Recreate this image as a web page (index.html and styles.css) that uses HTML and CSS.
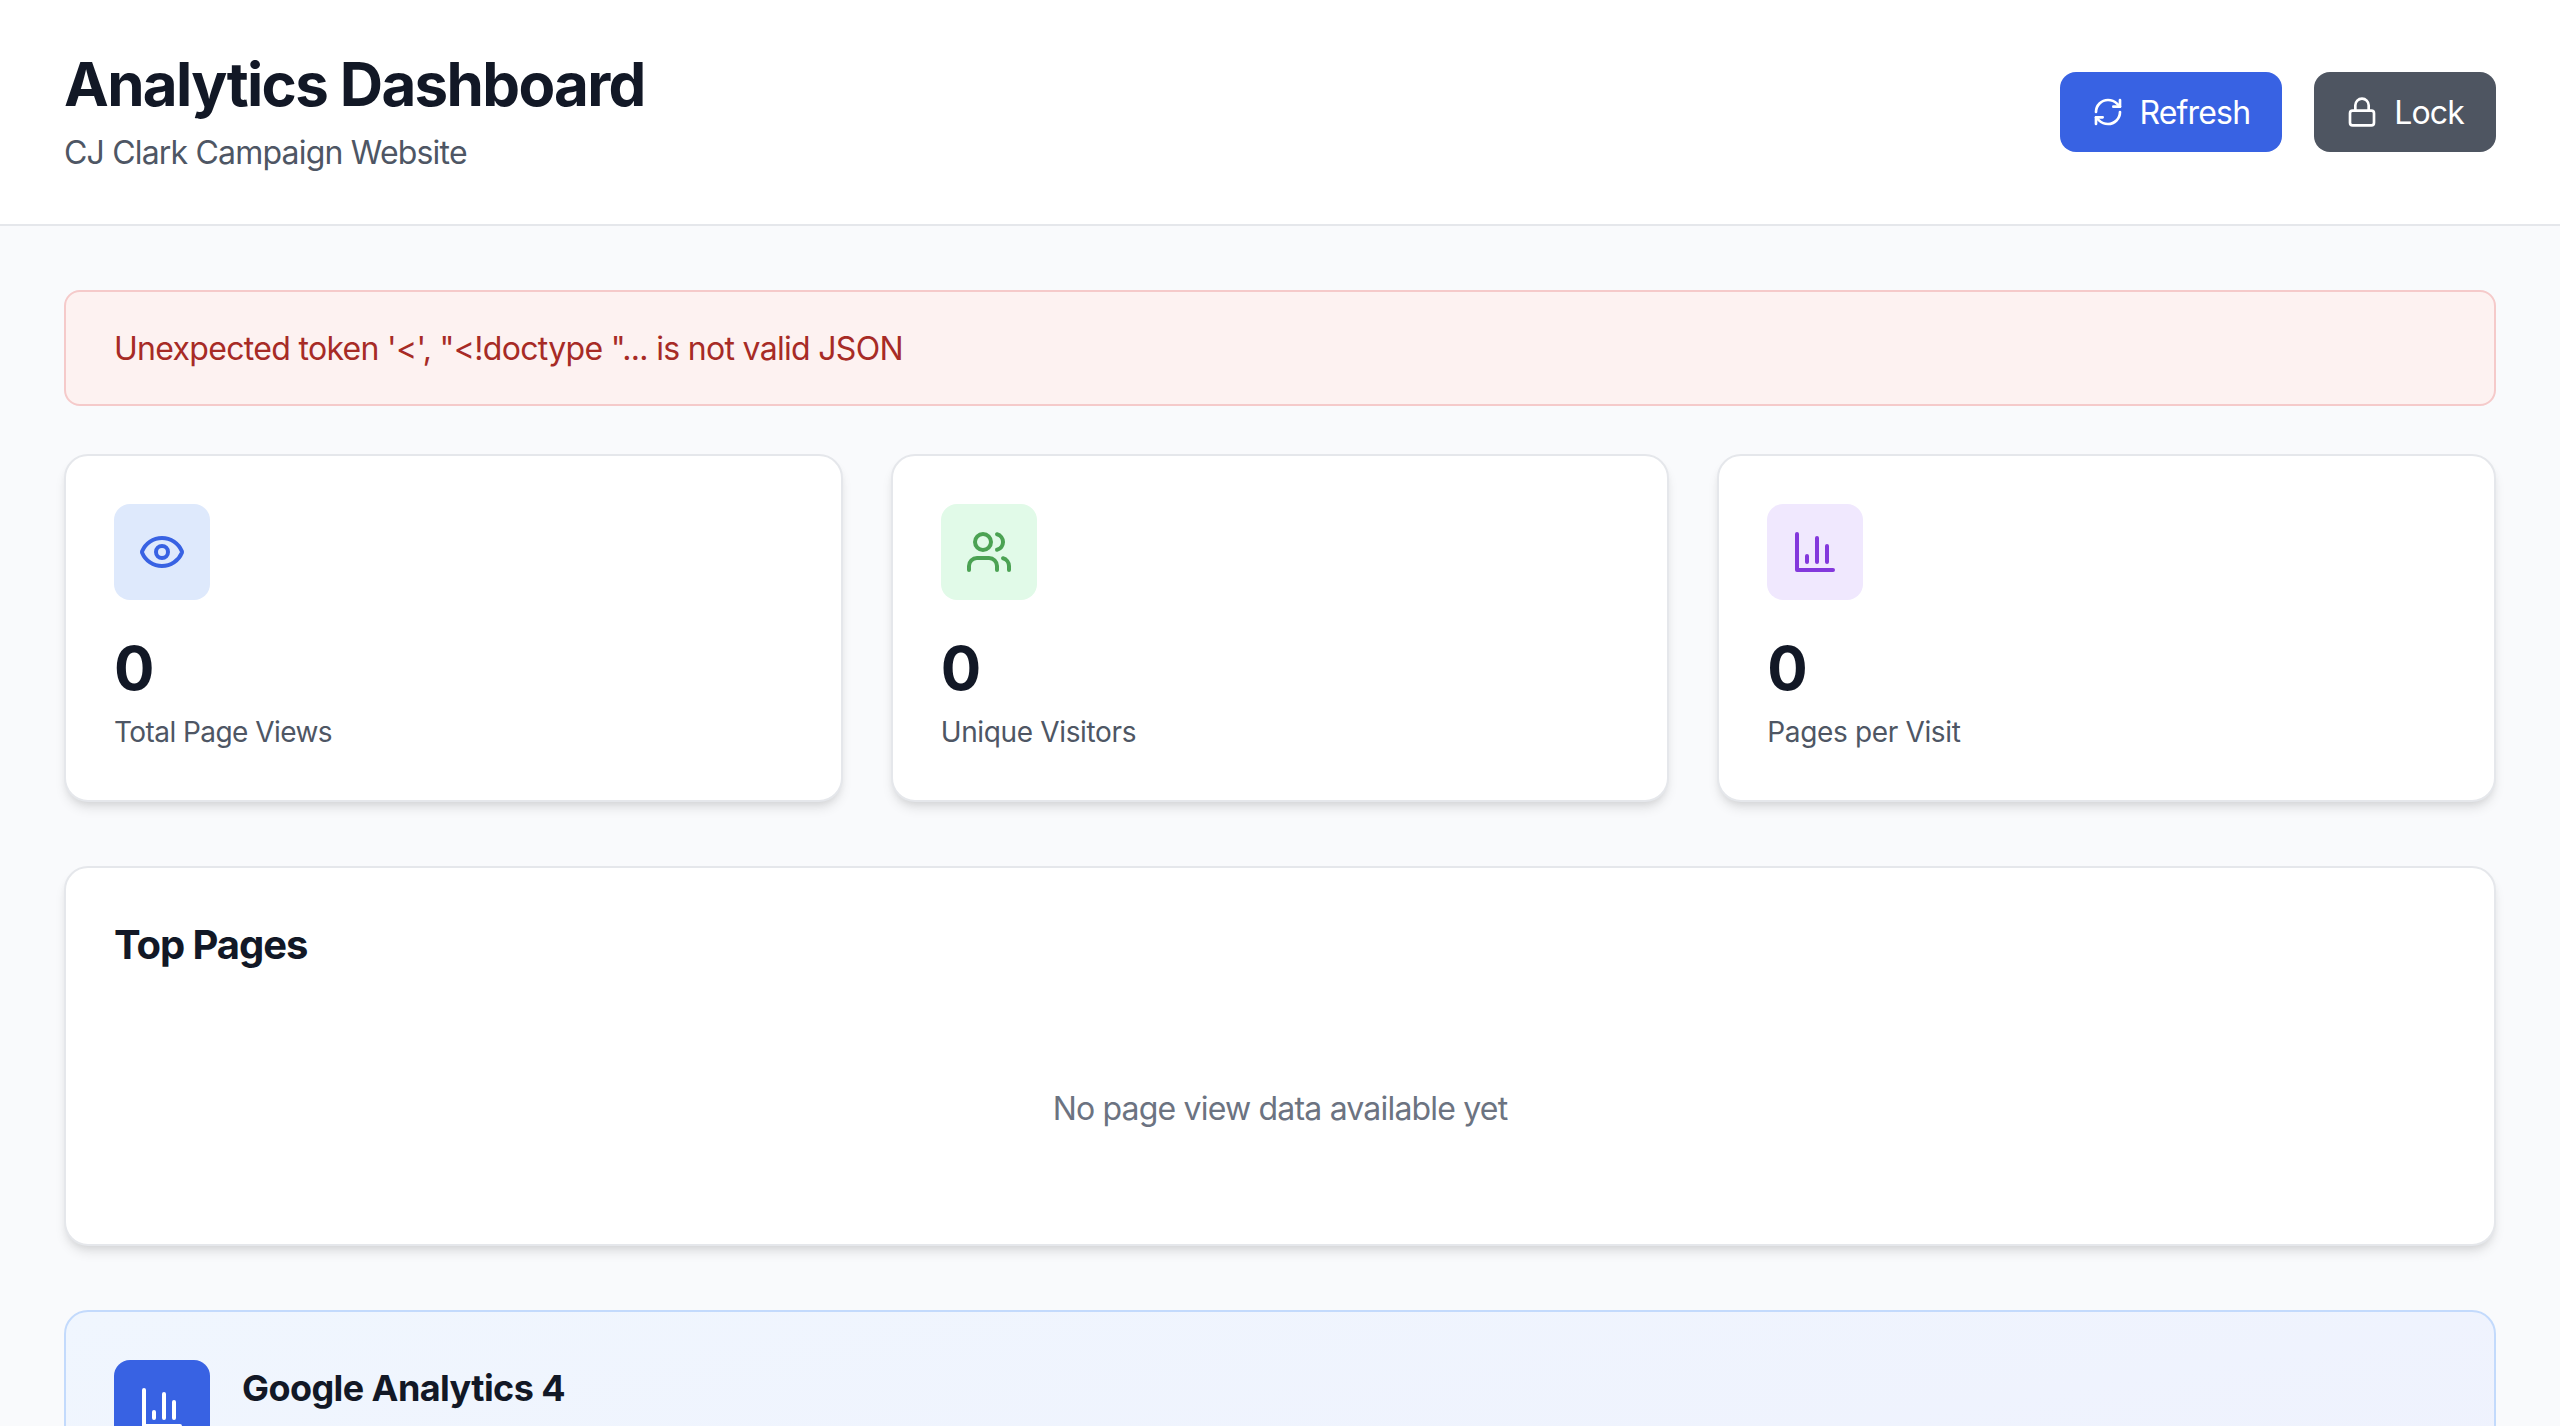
FILE: index.html
```html
<!DOCTYPE html>
<html lang="en">
<head>
<meta charset="utf-8">
<title>Analytics Dashboard</title>
<link rel="stylesheet" href="styles.css">
</head>
<body>
<header class="header">
  <div>
    <h1 class="title">Analytics Dashboard</h1>
    <p class="subtitle">CJ Clark Campaign Website</p>
  </div>
  <div class="actions">
    <button class="btn btn-primary">
      <svg class="icon-sm" viewBox="0 0 24 24"><path d="M3 12a9 9 0 0 1 9-9 9.75 9.75 0 0 1 6.74 2.74L21 8"/><path d="M21 3v5h-5"/><path d="M21 12a9 9 0 0 1-9 9 9.75 9.75 0 0 1-6.74-2.74L3 16"/><path d="M8 16H3v5"/></svg>
      <span class="btn-text">Refresh</span>
    </button>
    <button class="btn btn-secondary">
      <svg class="icon-sm" viewBox="0 0 24 24"><rect x="3" y="11" width="18" height="11" rx="2"/><path d="M7 11V7a5 5 0 0 1 10 0v4"/></svg>
      <span class="btn-text">Lock</span>
    </button>
  </div>
</header>
<main class="main">
  <div class="alert">Unexpected token '&lt;', "&lt;!doctype "... is not valid JSON</div>
  <section class="stats">
    <div class="card">
      <div class="tile tile-blue"><svg class="icon" viewBox="0 0 24 24"><path d="M2.062 12.348a1 1 0 0 1 0-.696 10.75 10.75 0 0 1 19.876 0 1 1 0 0 1 0 .696 10.75 10.75 0 0 1-19.876 0"/><circle cx="12" cy="12" r="3"/></svg></div>
      <div class="value">0</div>
      <div class="label label-tight">Total Page Views</div>
    </div>
    <div class="card">
      <div class="tile tile-green"><svg class="icon" viewBox="0 0 24 24"><path d="M16 21v-2a4 4 0 0 0-4-4H6a4 4 0 0 0-4 4v2"/><circle cx="9" cy="7" r="4"/><path d="M22 21v-2a4 4 0 0 0-3-3.87"/><path d="M16 3.13a4 4 0 0 1 0 7.75"/></svg></div>
      <div class="value">0</div>
      <div class="label">Unique Visitors</div>
    </div>
    <div class="card">
      <div class="tile tile-purple"><svg class="icon" viewBox="0 0 24 24"><path d="M3 3v18h18"/><path d="M18 17V9"/><path d="M13 17V5"/><path d="M8 17v-3"/></svg></div>
      <div class="value">0</div>
      <div class="label">Pages per Visit</div>
    </div>
  </section>
  <section class="card pages">
    <h2 class="heading">Top Pages</h2>
    <p class="empty">No page view data available yet</p>
  </section>
  <section class="promo">
    <div class="tile tile-solid"><svg class="icon" viewBox="0 0 24 24"><path d="M3 3v18h18"/><path d="M18 17V9"/><path d="M13 17V5"/><path d="M8 17v-3"/></svg></div>
    <h3 class="promo-title">Google Analytics 4</h3>
  </section>
</main>
</body>
</html>
```
FILE: styles.css
```css
* { box-sizing: border-box; margin: 0; padding: 0; }

body {
  height: 100vh;
  overflow: hidden;
  background: #f9fafc;
  color: #121826;
  font: 32px/48px Inter, "Liberation Sans", sans-serif;
  letter-spacing: -0.81px;
}

.header {
  display: flex;
  justify-content: space-between;
  align-items: center;
  height: 226px;
  padding: 48px 64px;
  background: #fff;
  border-bottom: 2px solid #e5e7eb;
}

.title { font-size: 60px; line-height: 72px; font-weight: 700; letter-spacing: -1.66px; }
.subtitle { margin: 9px 0 -1px; color: #4e5664; }

.actions { display: flex; gap: 32px; }

.btn {
  display: flex;
  align-items: center;
  gap: 16px;
  height: 80px;
  padding: 0 32px;
  border: 0;
  border-radius: 16px;
  color: #fff;
  font: inherit;
  letter-spacing: -0.84px;
}
.btn-primary { background: #3862e3; }
.btn-secondary { background: #4e5561; }
.btn-text { padding-top: 2px; }

svg {
  display: block;
  flex: none;
  fill: none;
  stroke: currentColor;
  stroke-width: 2;
  stroke-linecap: round;
  stroke-linejoin: round;
}
.icon { width: 48px; height: 48px; }
.icon-sm { width: 32px; height: 32px; }

.main { padding: 64px; }

.alert {
  margin-bottom: 48px;
  padding: 33px 48px 31px;
  background: #fdf2f1;
  border: 2px solid #f5caca;
  border-radius: 16px;
  color: #a72b26;
  letter-spacing: -0.69px;
}

.stats {
  display: grid;
  grid-template-columns: repeat(3, 1fr);
  gap: 48px;
  margin-bottom: 64px;
}

.card {
  padding: 48px;
  background: #fff;
  border: 2px solid #e5e7eb;
  border-radius: 24px;
  box-shadow: 0 8px 12px -2px rgb(0 0 0 / .1), 0 4px 8px -4px rgb(0 0 0 / .1);
}

.tile {
  display: flex;
  flex: none;
  align-items: center;
  justify-content: center;
  width: 96px;
  height: 96px;
  border-radius: 16px;
}
.tile-blue { background: #dee9fc; color: #3862e3; }
.tile-green { background: #e1fae8; color: #4ba253; }
.tile-purple { background: #f0e8fe; color: #8338dc; }
.tile-solid { background: #3862e3; color: #fff; }

.value { margin: 32px 0 8px; font-size: 60px; line-height: 72px; font-weight: 700; }
.label { color: #4e5664; font-size: 28px; line-height: 40px; letter-spacing: -0.35px; }
.label-tight { letter-spacing: -0.56px; }

.pages { margin-bottom: 64px; }
.heading { padding-top: 1px; margin-bottom: 47px; font-size: 40px; line-height: 56px; font-weight: 700; letter-spacing: -1.08px; }
.empty { padding: 65px 0 63px; text-align: center; color: #6c7381; }

.promo {
  display: flex;
  align-items: flex-start;
  gap: 32px;
  height: 430px;
  padding: 48px;
  background: linear-gradient(to bottom right, #f0f6fe, #eef0fd);
  border: 2px solid #c3dafc;
  border-radius: 24px;
}
.promo-title { font-size: 36px; line-height: 56px; font-weight: 700; letter-spacing: -0.58px; }
```
